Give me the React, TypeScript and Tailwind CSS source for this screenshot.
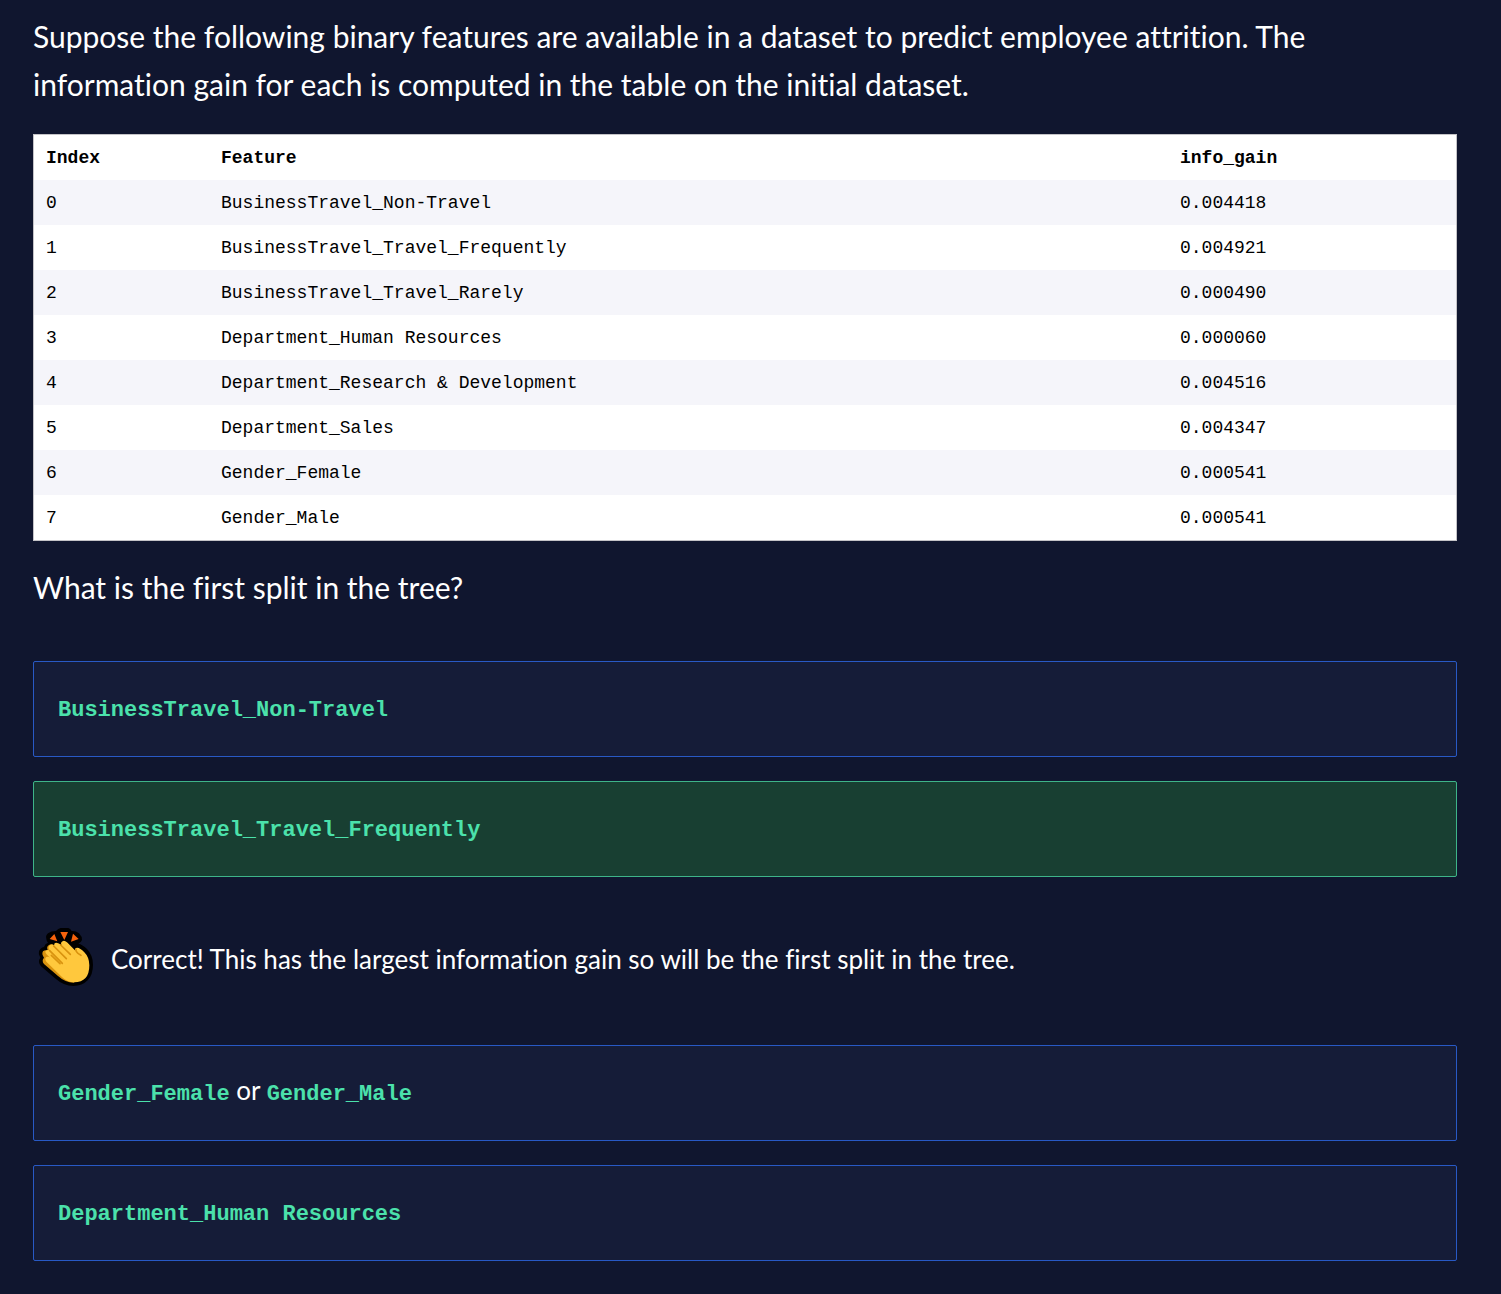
import type { ReactNode } from "react";

const rows: [string, string][] = [
  ["BusinessTravel_Non-Travel", "0.004418"],
  ["BusinessTravel_Travel_Frequently", "0.004921"],
  ["BusinessTravel_Travel_Rarely", "0.000490"],
  ["Department_Human Resources", "0.000060"],
  ["Department_Research & Development", "0.004516"],
  ["Department_Sales", "0.004347"],
  ["Gender_Female", "0.000541"],
  ["Gender_Male", "0.000541"],
];

function ClapIcon() {
  return (
    <svg viewBox="18 21 180 180" className="size-15 shrink-0" aria-hidden="true">
      <path
        d="M49 56 Q46 47 54 40 Q63 33 78 33 Q84 25 92 24 L115 24 Q121 26 125 33 Q137 32 147 40 Q157 50 156 60 Q153 68 145 71 Q157 73 171 87 Q189 106 189 134 Q189 164 173 181 Q157 198 130 198 Q101 198 75 175 L33 139 Q22 125 31 113 Q24 104 27 94 Q31 83 42 81 Q45 71 54 68 Q49 62 49 56 Z"
        fill="#000"
      />
      <path d="M73 42 L82 64 L59 57 Z M91 36 L114 36 L103 60 Z M129 41 L146 57 L123 65 Z" fill="#f7630c" />
      <path
        d="M39 94 Q45 88 54 92 Q48 82 56 76 Q64 70 72 76 L150 160 L132 188 Q106 188 84 168 L42 132 Q34 122 42 113 Q34 102 39 94 Z"
        fill="#d9930f"
      />
      <path
        d="M94 67 Q101 58 111 67 L140 96 Q131 89 138 84 Q147 80 163 97 Q178 112 178 136 Q178 187 132 187 Q112 187 95 170 L49 125 Q43 117 48 112 Q54 108 60 113 L49 102 Q43 95 49 91 Q55 88 61 93 Q53 84 58 77 Q65 70 73 76 Q71 69 79 68 Q86 68 96 77 Q91 72 94 67 Z"
        fill="#ffc83d"
      />
      <g fill="none" stroke="#d9930f" strokeWidth="5" strokeLinecap="round" strokeLinejoin="round">
        <path d="M92 75 L121 103" />
        <path d="M71 78 L109 116" />
        <path d="M59 92 L97 130" />
        <path d="M59 112 L90 131" stroke="none" />
        <path d="M64 106 L90 131" />
        <path d="M138 88 Q136 93 144 100 L153 106" />
      </g>
    </svg>
  );
}

function Code({ children }: { children: string }) {
  return (
    <code className="font-['Liberation_Mono',monospace] text-[22px] leading-none font-bold text-[#4be1ab]">
      {children}
    </code>
  );
}

function Answer({ correct = false, children }: { correct?: boolean; children: ReactNode }) {
  return (
    <button
      type="button"
      className={`block w-full rounded-xs border px-6 pt-[25px] pb-[31px] text-left text-[26px] leading-[38px] ${
        correct ? "border-[#3eb489] bg-[#183f32]" : "border-[#2859c5] bg-[#151c38]"
      }`}
    >
      {children}
    </button>
  );
}

export default function App() {
  return (
    <main className="min-h-screen bg-[#10162f] pt-3 pr-11 pb-8 pl-[33px] font-[Lato,sans-serif] text-white [font-variant-ligatures:none]">
      <p className="text-[30px] leading-12">
        Suppose the following binary features are available in a dataset to predict employee attrition. The
        information gain for each is computed in the table on the initial dataset.
      </p>

      <table className="mt-[26px] w-full table-fixed border-separate border-spacing-0 border border-[#c4c3c7] bg-white text-left font-['Liberation_Mono',monospace] text-lg text-black">
        <thead>
          <tr className="h-[45px]">
            <th scope="col" className="w-[175px] px-3 font-bold">Index</th>
            <th scope="col" className="px-3 font-bold">Feature</th>
            <th scope="col" className="w-[288px] px-3 font-bold">info_gain</th>
          </tr>
        </thead>
        <tbody>
          {rows.map(([feature, gain], index) => (
            <tr key={feature} className="h-[45px] odd:bg-[#f5f5fa]">
              <td className="px-3">{index}</td>
              <td className="px-3">{feature}</td>
              <td className="px-3">{gain}</td>
            </tr>
          ))}
        </tbody>
      </table>

      <h2 className="mt-[22px] text-[30px] leading-12">What is the first split in the tree?</h2>

      <section className="mt-[50px] flex flex-col gap-6" aria-label="Answers">
        <Answer>
          <Code>BusinessTravel_Non-Travel</Code>
        </Answer>
        <Answer correct>
          <Code>BusinessTravel_Travel_Frequently</Code>
        </Answer>
        <div role="status" className="flex h-30 items-start gap-[15px] pt-[26px] pl-[3px]">
          <ClapIcon />
          <p className="pt-3 text-[26px] leading-10">
            Correct! This has the largest information gain so will be the first split in the tree.
          </p>
        </div>
        <Answer>
          <Code>Gender_Female</Code> or <Code>Gender_Male</Code>
        </Answer>
        <Answer>
          <Code>Department_Human Resources</Code>
        </Answer>
      </section>
    </main>
  );
}
